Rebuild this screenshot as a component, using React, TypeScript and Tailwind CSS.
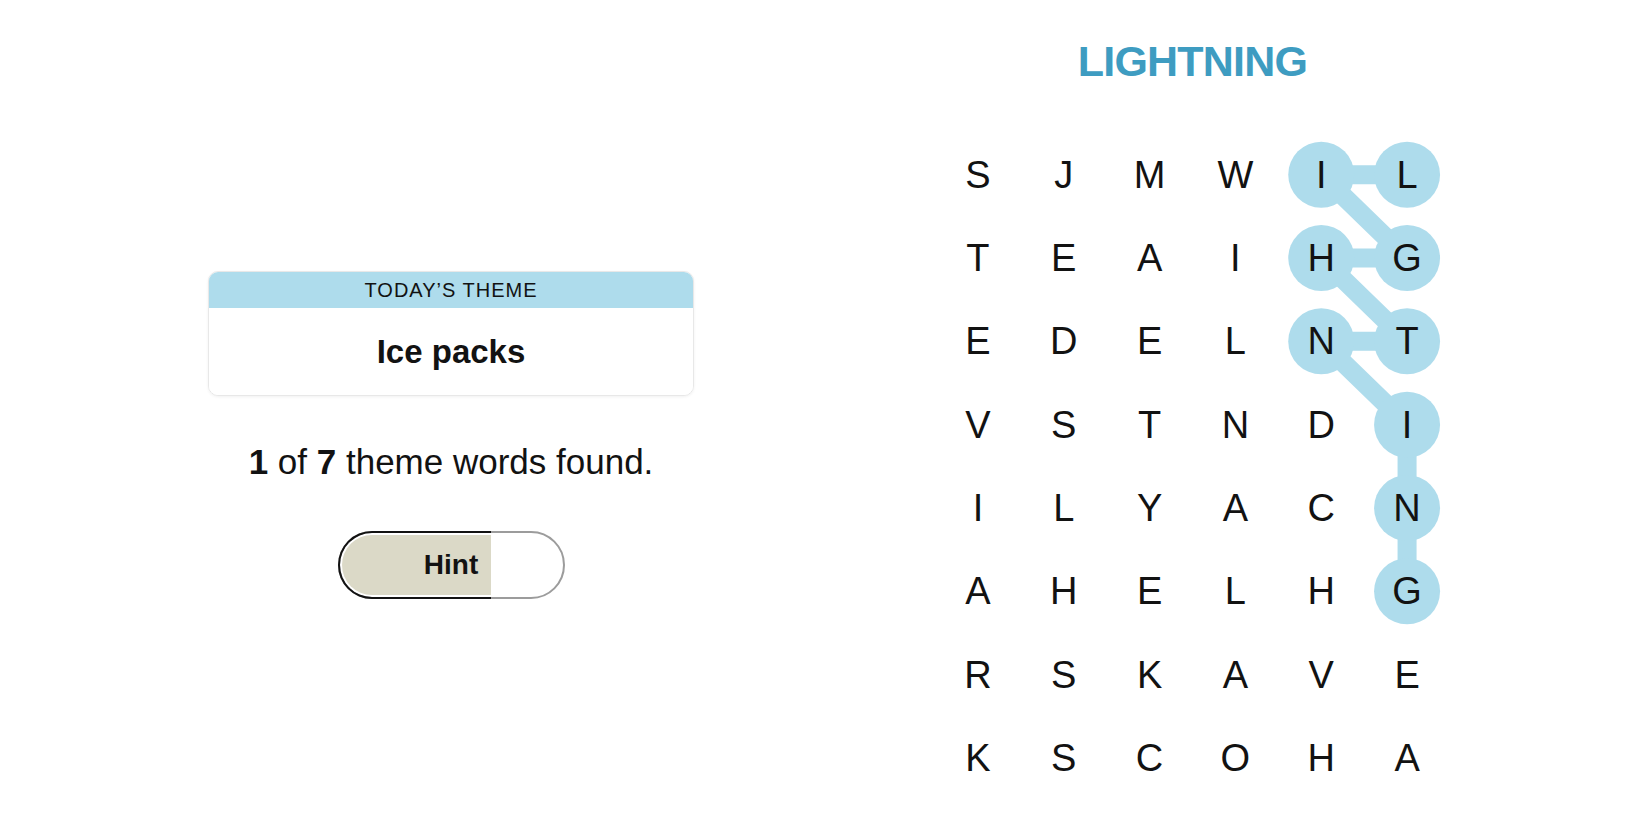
import React from "react";

const GRID = [
  "SJMWIL",
  "TEAIHG",
  "EDELNT",
  "VSTNDI",
  "ILYACN",
  "AHELHG",
  "RSKAVE",
  "KSCOHA",
];

const CELL_W = 85.83;
const CELL_H = 83.33;

// LIGHTNING, in spelling order: [col, row]
const PATH: [number, number][] = [
  [5, 0], [4, 0], [5, 1], [4, 1], [5, 2], [4, 2], [5, 3], [5, 4], [5, 5],
];

const center = ([c, r]: [number, number]) => ({
  x: CELL_W / 2 + c * CELL_W,
  y: CELL_H / 2 + r * CELL_H,
});

function Board() {
  const pts = PATH.map(center);
  return (
    <div className="relative w-[515px] h-[666px]">
      {/* found word highlight */}
      <svg className="absolute inset-0 pointer-events-none" width={515} height={666}>
        <polyline
          points={pts.map((p) => `${p.x},${p.y}`).join(" ")}
          fill="none"
          stroke="#aedcec"
          strokeWidth={19}
          strokeLinejoin="round"
        />
        {pts.map((p, i) => (
          <circle key={i} cx={p.x} cy={p.y} r={33} fill="#aedcec" />
        ))}
      </svg>

      <div className="relative grid grid-cols-[repeat(6,85.83px)] auto-rows-[83.33px]">
        {GRID.flatMap((row, r) =>
          row.split("").map((ch, c) => (
            <div key={`${r}-${c}`} className="flex items-center justify-center">
              <span className="text-[38px] leading-none text-[#121212]">{ch}</span>
            </div>
          ))
        )}
      </div>
    </div>
  );
}

function HintButton() {
  return (
    <button className="relative flex items-center justify-center w-[227px] h-[68px] rounded-full border-2 border-[#9c9c9c] bg-white">
      {/* hint progress */}
      <span className="absolute -left-[2px] -top-[2px] -bottom-[2px] w-[153px] rounded-l-full border-2 border-r-0 border-[#121212] p-[2px] pr-0">
        <span className="block h-full w-full rounded-l-full bg-[#dbd9c7]" />
      </span>
      <span className="relative text-[28px] font-bold text-[#121212]">Hint</span>
    </button>
  );
}

export default function App() {
  return (
    <div className="flex w-full h-[825px] bg-white font-['Liberation_Sans',Arial,sans-serif] text-[#121212]">
      <div className="w-[902px] flex flex-col items-center pt-[271px]">
        <div className="w-[486px] rounded-[10px] border border-[#e8e8e8] shadow-[0_1px_3px_rgba(0,0,0,0.06)] overflow-hidden">
          <div className="h-[36px] flex items-center justify-center bg-[#aedcec]">
            <span className="text-[20px] tracking-[1px] leading-none">TODAY’S THEME</span>
          </div>
          <div className="h-[87px] flex items-center justify-center bg-white">
            <span className="text-[33px] font-bold">Ice packs</span>
          </div>
        </div>

        <p className="mt-[46px] text-[35px] leading-[40px]">
          <span className="font-bold">1</span> of <span className="font-bold">7</span> theme words found.
        </p>

        <div className="mt-[49px]">
          <HintButton />
        </div>
      </div>

      <div className="ml-[33px] w-[515px] flex flex-col items-center pt-[37px]">
        <h1 className="text-[43px] leading-[48px] font-bold tracking-[-0.8px] text-[#3e9cc1]">LIGHTNING</h1>
        <div className="mt-[48px]">
          <Board />
        </div>
      </div>
    </div>
  );
}
